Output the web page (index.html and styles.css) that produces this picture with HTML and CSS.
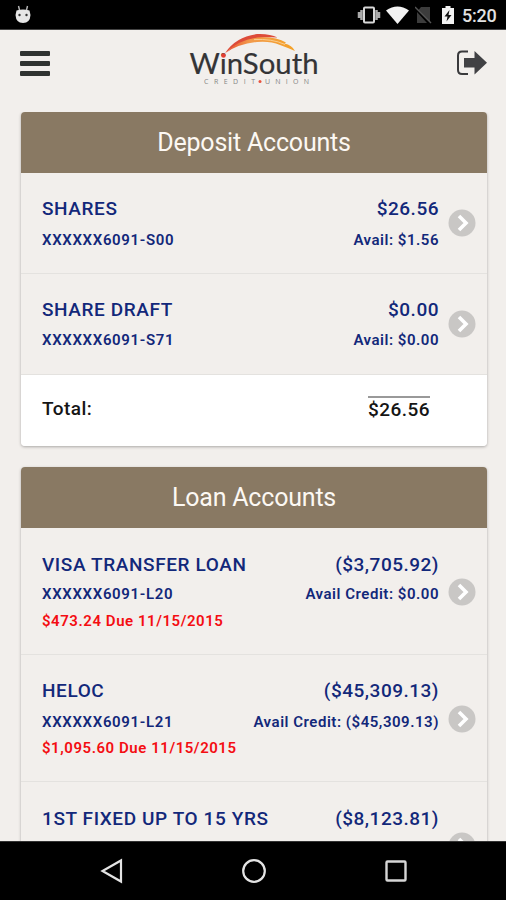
FILE: index.html
```html
<!DOCTYPE html>
<html lang="en">
<head>
<meta charset="utf-8">
<title>WinSouth Credit Union</title>
<link rel="stylesheet" href="styles.css">
</head>
<body>
<svg class="defs" width="0" height="0" aria-hidden="true">
  <symbol id="chev" viewBox="0 0 28 28"><circle cx="14" cy="14" r="13.5" fill="#c9c7c5"/><path d="M11 7l7 7-7 7" fill="none" stroke="#fff" stroke-width="3.6"/></symbol>
</svg>
<div class="screen">
  <div class="status">
    <svg class="bot" width="18" height="20" viewBox="0 0 18 20"><path d="M4.500 2l1 4M13.500 2l-1 4" stroke="#bbb" stroke-width="1.400"/><path d="M2.500 6.500Q9 4.500 15.500 6.500L16.500 11Q16 19 9 19T1.500 11Z" fill="#e6e6e6"/><circle cx="5.500" cy="11" r="1.200" fill="#333"/><circle cx="12.500" cy="11" r="1.200" fill="#333"/></svg>
    <div class="icons">
      <svg width="24" height="20" viewBox="0 0 24 20"><path d="M2 7v6M4.500 5v10M19.500 5v10M22 7v6" stroke="#aaa" stroke-width="2.500"/><rect x="7" y="2.500" width="10" height="15" rx="1" fill="#000" stroke="#d8d8d8" stroke-width="2"/></svg>
      <svg class="wifi" width="23" height="18" viewBox="0 0 23 18"><path d="M0 4.500Q11.500-3.500 23 4.500L11.500 18Z" fill="#f2f2f2"/></svg>
      <svg class="sim" width="17" height="18" viewBox="0 0 17 18"><path d="M6 1h9v15L3.500 4Z M2 6l10 11H2Z" fill="#3c3c3c"/><path d="M0 1l16 16" stroke="#555" stroke-width="1.500"/></svg>
      <svg class="batt" width="12" height="18" viewBox="0 0 12 18"><path d="M0 2h3.500V0h5v2H12v16H0Z" fill="#f2f2f2"/><path d="M7.500 4L2.500 10.500h3L4.500 15.500 9.500 9h-3Z" fill="#111"/></svg>
      <span class="time">5:20</span>
    </div>
  </div>
  <header class="bar">
    <div class="burger"><i></i><i></i><i></i></div>
    <svg class="logo" width="140" height="60" viewBox="185 30 140 60">
      <defs><linearGradient id="g" x1="0" y1="0" x2="1" y2="0"><stop offset="0" stop-color="#e8502f"/><stop offset=".35" stop-color="#f29a4c"/><stop offset="1" stop-color="#f4a227"/></linearGradient></defs>
      <path d="M225 53Q236 36.500 257 34Q270 33.500 277.500 37.500Q268 36.800 257 38.500Q238 41.500 225 53Z" fill="#dd4b39"/>
      <path d="M225.500 53Q239 39 261 37.300Q277 37 286 42.500L284.500 43.500Q292 45 295 51Q287 47.500 280 45Q270 40.800 257 42Q238 44 225.500 53Z" fill="url(#g)"/>
      <path d="M254 39.600Q272 38.500 285 44.500" fill="none" stroke="#fbd9a5" stroke-width=".8"/>
      <text class="word" x="189.500" y="73.500" textLength="129" lengthAdjust="spacingAndGlyphs">WinSouth</text>
      <circle cx="223.500" cy="55.500" r="2.300" fill="#e43d30"/>
      <text class="tag" x="204" y="84.300" textLength="51">CREDIT</text>
      <circle cx="260" cy="81.500" r="1.500" fill="#e8533f"/>
      <text class="tag" x="265" y="84.300" textLength="44">UNION</text>
    </svg>
    <svg class="exit" width="32" height="26" viewBox="0 0 32 26"><path d="M12 1.500H6Q2 1.500 2 5.500V20Q2 24 6 24h6" fill="none" stroke="#3a3a3c" stroke-width="2"/><path d="M8 8h10.500V1L31 12.700 18.500 24.500V17.500H8Z" fill="#414144"/></svg>
  </header>
  <main>
    <section class="card">
      <h2>Deposit Accounts</h2>
      <div class="row r1">
        <div class="info">
          <div class="line big"><span>SHARES</span><span class="amt">$26.56</span></div>
          <div class="line small"><span>XXXXXX6091-S00</span><span class="avail">Avail: $1.56</span></div>
        </div>
        <svg class="chev"><use href="#chev"/></svg>
      </div>
      <div class="row r2">
        <div class="info">
          <div class="line big"><span>SHARE DRAFT</span><span class="amt">$0.00</span></div>
          <div class="line small"><span>XXXXXX6091-S71</span><span class="avail">Avail: $0.00</span></div>
        </div>
        <svg class="chev"><use href="#chev"/></svg>
      </div>
      <div class="total"><span>Total:</span><span class="sum">$26.56</span></div>
    </section>
    <section class="card">
      <h2>Loan Accounts</h2>
      <div class="row loan l1">
        <div class="info">
          <div class="line big"><span>VISA TRANSFER LOAN</span><span class="amt">($3,705.92)</span></div>
          <div class="line small"><span>XXXXXX6091-L20</span><span class="avail">Avail Credit: $0.00</span></div>
          <div class="line due">$473.24 Due 11/15/2015</div>
        </div>
        <svg class="chev"><use href="#chev"/></svg>
      </div>
      <div class="row loan l2">
        <div class="info">
          <div class="line big"><span>HELOC</span><span class="amt">($45,309.13)</span></div>
          <div class="line small"><span>XXXXXX6091-L21</span><span class="avail">Avail Credit: ($45,309.13)</span></div>
          <div class="line due">$1,095.60 Due 11/15/2015</div>
        </div>
        <svg class="chev"><use href="#chev"/></svg>
      </div>
      <div class="row loan l3">
        <div class="info">
          <div class="line big"><span>1ST FIXED UP TO 15 YRS</span><span class="amt">($8,123.81)</span></div>
        </div>
        <svg class="chev"><use href="#chev"/></svg>
      </div>
    </section>
  </main>
  <nav>
    <svg width="24" height="26" viewBox="0 0 24 26"><path d="M21 2.500v21L2.500 13Z" fill="none" stroke="#e4e4e4" stroke-width="2.200"/></svg>
    <svg class="home" width="26" height="26" viewBox="0 0 26 26"><circle cx="13" cy="13" r="10.800" fill="none" stroke="#e4e4e4" stroke-width="2.200"/></svg>
    <svg width="22" height="22" viewBox="0 0 22 22"><rect x="1.500" y="1.500" width="19" height="19" rx="1" fill="none" stroke="#d6d6d6" stroke-width="2.400"/></svg>
  </nav>
</div>
</body>
</html>
```
FILE: styles.css
```css
* { box-sizing: border-box; }
body { margin: 0; background: #f2efec; font-family: Roboto, sans-serif; }
.defs { display: block; }
.screen { width: 506px; height: 900px; display: flex; flex-direction: column; overflow: hidden; }
.status { height: 30px; flex: none; background: #000; border-bottom: 1px solid #444; display: flex; justify-content: space-between; align-items: center; padding: 0 9px 0 14px; }
.bot { margin-top: -1px; }
.icons { display: flex; align-items: center; }
.wifi { margin-left: 5px; }
.sim { margin-left: 6px; }
.batt { margin-left: 10px; }
.time { color: #e2e2e2; font-size: 18px; font-weight: 500; line-height: 20px; margin-left: 8px; width: 35px; white-space: nowrap; margin-top: 2px; letter-spacing: -.2px; }
.bar { height: 82px; flex: none; display: flex; justify-content: space-between; align-items: flex-start; padding: 0 18px 0 20px; }
.burger { width: 30px; margin-top: 21px; display: flex; flex-direction: column; gap: 5px; }
.burger i { height: 5px; background: #303331; border-radius: 1px; }
.logo { display: block; margin-left: 3px; }
.word { font: 400 28.5px Lato, sans-serif; fill: #343436; stroke: #343436; stroke-width: .2px; }
.tag { font: 7px "Open Sans", sans-serif; fill: #858585; }
.exit { margin-top: 20px; }
main { flex: 1; min-height: 0; overflow: hidden; padding: 0 19px 0 21px; }
.card { border-radius: 4px; box-shadow: 0 1px 3px rgba(0,0,0,.3); margin-bottom: 21px; overflow: hidden; background: #f2efec; }
h2 { margin: 0; height: 61px; background: #897963; color: #fcf8f3; font-size: 25px; font-weight: 400; line-height: 62px; text-align: center; letter-spacing: -.2px; }
.row { display: flex; align-items: flex-start; height: 101px; border-bottom: 1px solid #e4e2df; padding: 24px 11px 0 21px; color: #12287a; }
.info { flex: 1; }
.line { display: flex; justify-content: space-between; white-space: nowrap; font-weight: 500; }
.big { font-size: 19px; line-height: 24px; letter-spacing: .6px; }
.amt { letter-spacing: .5px; }
.small { font-size: 15px; line-height: 20px; margin-top: 9px; letter-spacing: .65px; font-weight: 600; }
.avail { letter-spacing: .53px; }
.r2 .small { margin-top: 8px; }
.due { font-size: 15px; line-height: 20px; color: #f40d12; letter-spacing: .55px; font-weight: 600; margin-top: 7px; }
.chev { width: 28px; height: 28px; flex: none; margin: 12px 0 0 9px; }
.total { height: 71px; background: #fff; color: #151515; font-size: 19px; font-weight: 500; line-height: 24px; display: flex; justify-content: space-between; padding: 22px 57px 0 21px; letter-spacing: .45px; }
.sum { border-top: 2px solid #999; line-height: 24px; height: 28px; margin-top: -1px; }
.loan { height: 127px; }
.loan .chev { margin-top: 26px; }
.l1 .small { margin-top: 7px; }
.l1 .big, .l3 .big { margin-top: 1px; }
.l2 .small { margin-top: 9px; }
.l2 .due { margin-top: 6px; }
nav { height: 59px; flex: none; background: #000; border-top: 1px solid #333; display: flex; align-items: center; justify-content: space-between; padding: 0 99px 0 100px; }
.home { margin-left: -2px; }
```
